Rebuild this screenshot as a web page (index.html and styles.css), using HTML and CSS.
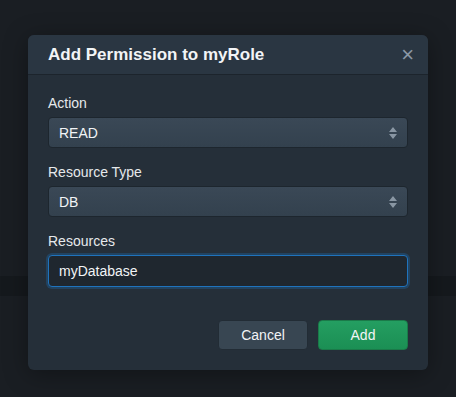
FILE: index.html
```html
<!DOCTYPE html>
<html lang="en">
<head>
    <meta charset="UTF-8">
    <title>Add Permission</title>
    <link rel="stylesheet" href="styles.css">
</head>
<body>
    <div class="backdrop">
        <div class="band"></div>
    </div>

    <div class="modal">
        <div class="modal-header">
            <h2>Add Permission to myRole</h2>
            <span class="close">&times;</span>
        </div>

        <div class="modal-body">
            <div class="field">
                <label>Action</label>
                <div class="select">
                    <span>READ</span>
                    <svg class="caret" width="8" height="12" viewBox="0 0 8 12">
                        <path d="M4 0 L8 5 L0 5 Z M4 12 L8 7 L0 7 Z" fill="#8996a3"/>
                    </svg>
                </div>
            </div>

            <div class="field">
                <label>Resource Type</label>
                <div class="select">
                    <span>DB</span>
                    <svg class="caret" width="8" height="12" viewBox="0 0 8 12">
                        <path d="M4 0 L8 5 L0 5 Z M4 12 L8 7 L0 7 Z" fill="#8996a3"/>
                    </svg>
                </div>
            </div>

            <div class="field">
                <label>Resources</label>
                <div class="input">myDatabase</div>
            </div>
        </div>

        <div class="modal-footer">
            <button class="btn btn-cancel">Cancel</button>
            <button class="btn btn-add">Add</button>
        </div>
    </div>
</body>
</html>
```

FILE: styles.css
```css
* {
    margin: 0;
    padding: 0;
    box-sizing: border-box;
}

body {
    font-family: "Liberation Sans", Arial, sans-serif;
    background: #1a1e23;
    color: #eef1f3;
    width: 456px;
    height: 397px;
    overflow: hidden;
    position: relative;
}

.backdrop {
    padding-top: 276px;
}

.band {
    height: 20px;
    background: #15191d;
}

.modal {
    position: absolute;
    left: 28px;
    top: 35px;
    width: 400px;
    background: #252f39;
    border-radius: 6px;
    box-shadow: 0 4px 24px rgba(0, 0, 0, 0.35);
    overflow: hidden;
}

.modal-header {
    height: 40px;
    padding: 0 14px 0 20px;
    background: #2a3642;
    border-bottom: 1px solid #1c242c;
    display: flex;
    align-items: center;
    justify-content: space-between;
}

.modal-header h2 {
    font-size: 17px;
    font-weight: 700;
    color: #f2f4f6;
}

.close {
    font-size: 22px;
    color: #8a98a6;
    line-height: 1;
}

.modal-body {
    padding: 18px 20px 0;
}

.field {
    margin-bottom: 14px;
}

.field label {
    display: block;
    font-size: 14px;
    line-height: 20px;
    margin-bottom: 4px;
    color: #e6e9ec;
}

.select {
    height: 31px;
    padding: 0 10px;
    background: linear-gradient(#3a4856, #33414e);
    border: 1px solid #1d262e;
    border-radius: 4px;
    display: flex;
    align-items: center;
    justify-content: space-between;
    font-size: 14px;
    color: #f2f4f6;
}

.input {
    height: 32px;
    padding: 0 10px;
    background: #1f272f;
    border: 1px solid #1f73bd;
    border-radius: 4px;
    box-shadow: 0 0 0 2px rgba(31, 115, 189, 0.3);
    display: flex;
    align-items: center;
    font-size: 14px;
    color: #f2f4f6;
}

.modal-footer {
    padding: 19px 20px 20px;
    display: flex;
    justify-content: flex-end;
    gap: 10px;
}

.btn {
    width: 90px;
    height: 30px;
    border-radius: 4px;
    font-family: inherit;
    font-size: 14px;
    color: #f2f4f6;
}

.btn-cancel {
    background: #384652;
    border: 1px solid #222c35;
}

.btn-add {
    background: linear-gradient(#249e61, #1b8f54);
    border: 1px solid #1a7a49;
}
```
